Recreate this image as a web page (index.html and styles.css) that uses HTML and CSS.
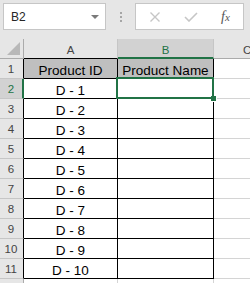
FILE: index.html
```html
<!DOCTYPE html>
<html lang="en">
<head>
    <meta charset="UTF-8">
    <title>Products</title>
    <link rel="stylesheet" href="styles.css">
</head>
<body>
    <div class="formula-bar">
        <div class="name-box">
            <span class="cell-ref">B2</span>
            <span class="caret"></span>
        </div>
        <div class="grip"><i></i><i></i><i></i></div>
        <div class="formula-box">
            <svg class="fb-icon" width="12" height="12" viewBox="0 0 12 12">
                <path d="M1.5 1.5 L10.5 10.5 M10.5 1.5 L1.5 10.5" stroke="#c6c6c6" stroke-width="1.4" fill="none"/>
            </svg>
            <svg class="fb-icon check" width="14" height="10" viewBox="0 0 14 10">
                <path d="M1 5 L5 9 L13 1" stroke="#c6c6c6" stroke-width="1.6" fill="none"/>
            </svg>
            <span class="fx">f<small>x</small></span>
        </div>
    </div>

    <div class="sheet">
        <div class="corner"><span class="tri"></span></div>
        <div class="col-head">A</div>
        <div class="col-head active">B</div>
        <div class="col-head last">C</div>

        <div class="row-head">1</div>
        <div class="cell t title">Product ID</div>
        <div class="cell t title">Product Name</div>
        <div class="cell"></div>

        <div class="row-head active">2</div>
        <div class="cell t">D - 1</div>
        <div class="cell t"></div>
        <div class="cell"></div>

        <div class="row-head">3</div>
        <div class="cell t">D - 2</div>
        <div class="cell t"></div>
        <div class="cell"></div>

        <div class="row-head">4</div>
        <div class="cell t">D - 3</div>
        <div class="cell t"></div>
        <div class="cell"></div>

        <div class="row-head">5</div>
        <div class="cell t">D - 4</div>
        <div class="cell t"></div>
        <div class="cell"></div>

        <div class="row-head">6</div>
        <div class="cell t">D - 5</div>
        <div class="cell t"></div>
        <div class="cell"></div>

        <div class="row-head">7</div>
        <div class="cell t">D - 6</div>
        <div class="cell t"></div>
        <div class="cell"></div>

        <div class="row-head">8</div>
        <div class="cell t">D - 7</div>
        <div class="cell t"></div>
        <div class="cell"></div>

        <div class="row-head">9</div>
        <div class="cell t">D - 8</div>
        <div class="cell t"></div>
        <div class="cell"></div>

        <div class="row-head">10</div>
        <div class="cell t">D - 9</div>
        <div class="cell t"></div>
        <div class="cell"></div>

        <div class="row-head">11</div>
        <div class="cell t">D - 10</div>
        <div class="cell t"></div>
        <div class="cell"></div>

        <!-- row 12, only its top edge is on screen -->
        <div class="row-head plain"></div>
        <div class="cell"></div>
        <div class="cell"></div>
        <div class="cell"></div>

        <!-- active cell B2 -->
        <div class="selection"><span class="handle"></span></div>
    </div>
</body>
</html>
```

FILE: styles.css
```css
body {
    margin: 0;
    width: 250px;
    height: 283px;
    overflow: hidden;
    background: #fff;
    font-family: "Liberation Sans", Arial, sans-serif;
}
.formula-bar {
    height: 39px;
    box-sizing: border-box;
    padding: 3px 0 0 3px;
    background: #e6e6e6;
    display: flex;
    align-items: flex-start;
}
.name-box {
    width: 103px;
    height: 27px;
    box-sizing: border-box;
    border: 1px solid #c6c6c6;
    background: #fff;
    display: flex;
    align-items: center;
    justify-content: space-between;
    padding: 0 6px 0 7px;
}
.cell-ref {
    font-size: 12px;
    color: #262626;
}
.caret {
    width: 0;
    height: 0;
    border-left: 4px solid transparent;
    border-right: 4px solid transparent;
    border-top: 4px solid #7a7a7a;
}
.grip {
    width: 29px;
    height: 27px;
    display: flex;
    flex-direction: column;
    align-items: center;
    justify-content: center;
    gap: 2px;
}
.grip i {
    width: 2px;
    height: 2px;
    background: #a6a6a6;
}
.formula-box {
    width: 109px;
    height: 27px;
    box-sizing: border-box;
    border: 1px solid #c6c6c6;
    background: #fff;
    display: flex;
    align-items: center;
    padding-left: 13px;
}
.fb-icon {
    display: block;
}
.check {
    margin-left: 23px;
}
.fx {
    margin-left: 23px;
    font-family: "Liberation Serif", "Times New Roman", serif;
    font-style: italic;
    font-size: 14px;
    color: #555;
}
.fx small {
    font-size: 11px;
}
.sheet {
    position: relative;
    display: grid;
    grid-template-columns: 24px 94px 96px 1fr;
    grid-template-rows: repeat(13, 20px);
    height: 244px;
    overflow: hidden;
}
.sheet > div {
    box-sizing: border-box;
    border-right: 1px solid #d4d4d4;
    border-bottom: 1px solid #d4d4d4;
}
.sheet > .corner {
    background: #e6e6e6;
    border-right-color: #ababab;
    border-bottom-color: #ababab;
    position: relative;
}
.tri {
    position: absolute;
    right: 3px;
    bottom: 3px;
    width: 0;
    height: 0;
    border-left: 13px solid transparent;
    border-bottom: 13px solid #b8b8b8;
}
.sheet > .col-head {
    background: #e6e6e6;
    border-right-color: #c6c6c6;
    border-bottom-color: #000;
    color: #444;
    font-size: 11.5px;
    display: flex;
    align-items: center;
    justify-content: center;
    padding-top: 2px;
}
.sheet > .col-head.active {
    background: #d2d2d2;
    color: #217346;
    border-bottom: 2px solid #217346;
    padding-top: 3px;
}
.sheet > .col-head.last {
    justify-content: flex-start;
    padding-left: 29px;
    border-bottom-color: #ababab;
    border-right: none;
    overflow: hidden;
}
.sheet > .row-head {
    background: #e6e6e6;
    border-right-color: #000;
    border-bottom-color: #c6c6c6;
    color: #444;
    font-size: 11.5px;
    display: flex;
    align-items: center;
    justify-content: center;
    padding: 1px 1px 0 0;
}
.sheet > .row-head.active {
    background: #d2d2d2;
    color: #217346;
    border-right: 2px solid #217346;
    padding-right: 0;
}
.sheet > .row-head.plain {
    border-right-color: #ababab;
}
.cell {
    display: flex;
    align-items: flex-end;
    justify-content: center;
    font-size: 13.5px;
    line-height: 14px;
    color: #000;
}
.sheet > .cell:nth-child(4n) {
    border-right: none;
}
.sheet > .t {
    border-right-color: #000;
    border-bottom-color: #000;
}
.title {
    background: #bfbfbf;
}
.sheet > .selection {
    position: absolute;
    left: 116px;
    top: 38px;
    width: 98px;
    height: 22px;
    box-sizing: border-box;
    border: 2px solid #217346;
}
.handle {
    position: absolute;
    right: -4px;
    bottom: -4px;
    width: 5px;
    height: 5px;
    background: #217346;
    box-shadow: 1px 1px 0 #fff;
}
```
